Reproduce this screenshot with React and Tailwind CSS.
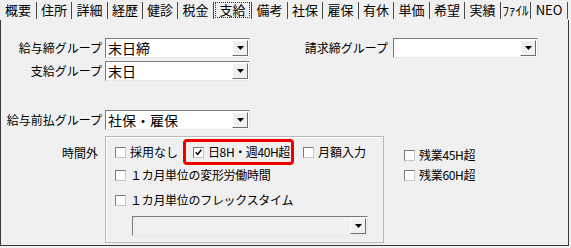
import React from "react";

const tabs = [
  { label: "概要", w: 36 },
  { label: "住所", w: 34 },
  { label: "詳細", w: 35 },
  { label: "経歴", w: 34 },
  { label: "健診", w: 34 },
  { label: "税金", w: 35 },
  { label: "支給", w: 37, active: true },
  { label: "備考", w: 35 },
  { label: "社保", w: 34 },
  { label: "雇保", w: 35 },
  { label: "有休", w: 34 },
  { label: "単価", w: 35 },
  { label: "希望", w: 34 },
  { label: "実績", w: 35 },
  { label: "ﾌｧｲﾙ", w: 29 },
  { label: "NEO", w: 36 },
];

const DropButton = () => (
  <div className="w-[16px] h-full flex items-center justify-center bg-[#f0f0f0] border-t border-l border-t-white border-l-white border-b border-r border-b-[#6e6e6e] border-r-[#6e6e6e]">
    <svg width="7" height="4" viewBox="0 0 7 4">
      <polygon points="0,0 7,0 3.5,4" fill="#000" />
    </svg>
  </div>
);

const Select = ({ value, width = "w-[145px]", disabled }) => (
  <div
    className={`${width} h-[20px] flex items-stretch border-t border-l border-t-[#7a7a7a] border-l-[#7a7a7a] border-b border-r border-b-[#e8e8e8] border-r-[#e8e8e8] ${
      disabled ? "bg-[#f0f0f0]" : "bg-white"
    }`}
  >
    <div className="flex-1 pl-[2px] text-[14px] leading-[18px] text-black whitespace-nowrap">{value}</div>
    <div className="py-[1px] pr-[1px] flex">
      <DropButton />
    </div>
  </div>
);

const Check = ({ checked }) => (
  <span className="inline-flex w-[11px] h-[11px] bg-white border-t border-l border-t-[#7a7a7a] border-l-[#7a7a7a] border-b border-r border-b-[#c8c8c8] border-r-[#c8c8c8] items-center justify-center shrink-0">
    {checked && (
      <svg width="7" height="7" viewBox="0 0 7 7">
        <polyline points="0.8,3.2 2.7,5.4 6.3,0.8" fill="none" stroke="#000" strokeWidth="1.5" />
      </svg>
    )}
  </span>
);

const CheckItem = ({ label, checked, spacing = "tracking-normal" }) => (
  <div className="flex items-center gap-[4px] text-[12px] leading-[16px] whitespace-nowrap shrink-0">
    <Check checked={checked} />
    <span className={spacing}>{label}</span>
  </div>
);

export default function App() {
  return (
    <div className="w-[571px] h-[248px] bg-[#f0f0f0] text-black overflow-hidden font-['Noto_Sans_CJK_JP','Noto_Sans',sans-serif]">
      {/* tabs */}
      <div className="flex h-[20px] items-center">
        {tabs.map((t) => (
          <React.Fragment key={t.label}>
            <div
              className="h-[20px] flex items-center justify-center text-[13px] leading-[16px]"
              style={{ width: t.w }}
            >
              {t.active ? (
                <span className="border border-dotted border-[#333] px-[3px] h-[16px] leading-[14px]">
                  {t.label}
                </span>
              ) : (
                <span>{t.label}</span>
              )}
            </div>
            <span className="w-px h-[17px] bg-[#4a4a4a]" />
          </React.Fragment>
        ))}
      </div>

      {/* panel */}
      <div className="w-[569px] h-[226px] border-l border-r border-b border-[#3a3a3a] flex flex-col">
        <div className="mt-[18px] flex items-center h-[20px]">
          <div className="w-[101px] text-right text-[12px] leading-[16px]">給与締グループ</div>
          <div className="ml-[3px]">
            <Select value="末日締" />
          </div>
          <div className="w-[138px] text-right text-[12px] leading-[16px]">請求締グループ</div>
          <div className="ml-[5px]">
            <Select value="" />
          </div>
        </div>

        <div className="mt-[3px] flex items-center h-[20px]">
          <div className="w-[101px] text-right text-[12px] leading-[16px]">支給グループ</div>
          <div className="ml-[3px]">
            <Select value="末日" />
          </div>
        </div>

        <div className="mt-[29px] flex items-center h-[20px]">
          <div className="w-[101px] text-right text-[12px] leading-[16px] whitespace-nowrap">給与前払グループ</div>
          <div className="ml-[3px]">
            <Select value="社保・雇保" />
          </div>
        </div>

        <div className="mt-[6px] flex items-start">
          <div className="w-[97px] text-right text-[12px] leading-[16px] mt-[9px]">時間外</div>
          <div className="ml-[7px] w-[279px] h-[107px] border border-[#b9b9b9] shadow-[inset_1px_1px_0_#fff] flex flex-col pl-[9px]">
            <div className="mt-[2px] flex items-center h-[26px]">
              <CheckItem label="採用なし" />
              <div className="ml-[5px] h-[26px] w-[111px] shrink-0 border-[3px] border-[#ee0000] rounded-[4px] flex items-center pl-[7px]">
                <CheckItem label="日8H・週40H超" checked spacing="tracking-[-0.4px]" />
              </div>
              <div className="ml-[9px]">
                <CheckItem label="月額入力" spacing="tracking-[0px]" />
              </div>
            </div>
            <div className="mt-[2px] h-[16px] flex items-center">
              <CheckItem label="１カ月単位の変形労働時間" spacing="tracking-[-0.3px]" />
            </div>
            <div className="mt-[9px] h-[16px] flex items-center">
              <CheckItem label="１カ月単位のフレックスタイム" spacing="tracking-[-0.3px]" />
            </div>
            <div className="mt-[8px] ml-[17px]">
              <Select value="" width="w-[236px]" disabled />
            </div>
          </div>
          <div className="ml-[20px] flex flex-col">
            <div className="mt-[11px] h-[16px] flex items-center">
              <CheckItem label="残業45H超" spacing="tracking-[-0.3px]" />
            </div>
            <div className="mt-[4px] h-[16px] flex items-center">
              <CheckItem label="残業60H超" spacing="tracking-[-0.3px]" />
            </div>
          </div>
        </div>
      </div>
    </div>
  );
}
